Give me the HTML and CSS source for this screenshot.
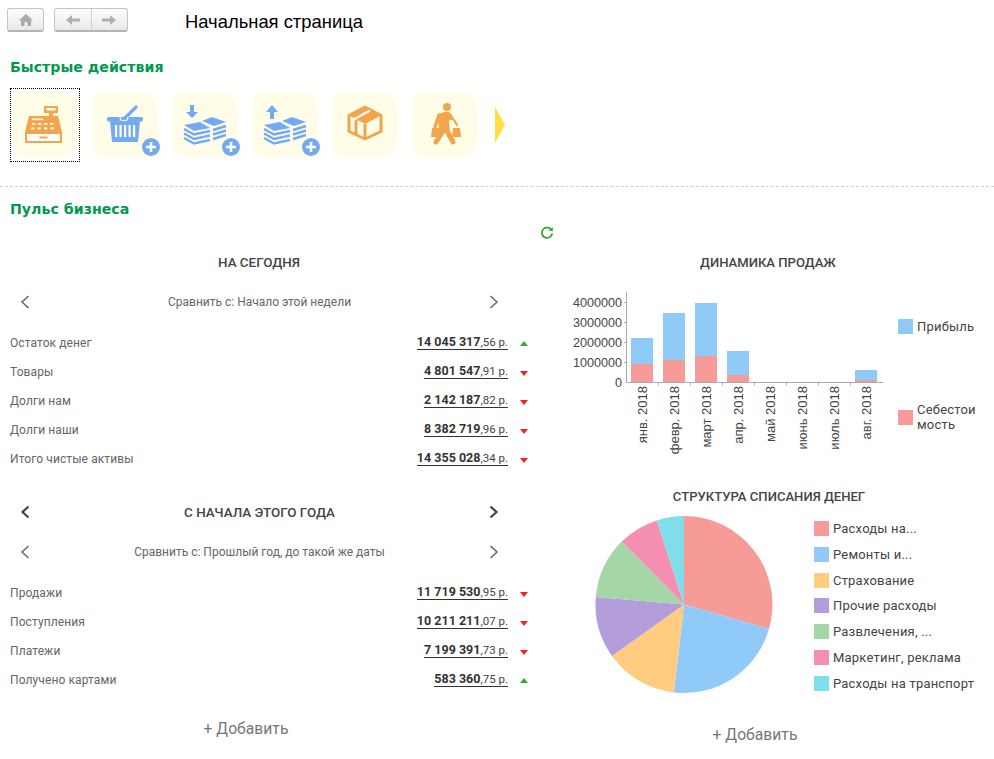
FILE: index.html
```html
<!DOCTYPE html>
<html lang="ru">
<head>
    <meta charset="UTF-8">
    <title>Начальная страница</title>
    <link rel="stylesheet" href="styles.css">
</head>
<body>
    <!-- Toolbar -->
    <div class="toolbar">
        <div class="tool-btn home-btn">
            <svg width="16" height="14" viewBox="0 0 16 14"><path d="M8 1 L15 7.5 H13 V13 H9.5 V9 H6.5 V13 H3 V7.5 H1 Z" fill="#aaa"/></svg>
        </div>
        <div class="tool-btn nav-btn">
            <span class="nav-part">
                <svg width="16" height="12" viewBox="0 0 16 12"><path d="M1 6 L7 1 V4.5 H15 V7.5 H7 V11 Z" fill="#b0b0b0"/></svg>
            </span>
            <span class="nav-part nav-part-right">
                <svg width="16" height="12" viewBox="0 0 16 12"><path d="M15 6 L9 1 V4.5 H1 V7.5 H9 V11 Z" fill="#b0b0b0"/></svg>
            </span>
        </div>
        <div class="page-title">Начальная страница</div>
    </div>

    <h2 class="section-title quick-title">Быстрые действия</h2>

    <!-- Shared pictures -->
    <svg class="defs" width="0" height="0">
        <symbol id="bills" viewBox="0 0 66 66">
            <polygon points="12,33 28,30 38,36 22,39" fill="#74aaf5"/>
            <polygon points="30,29 40,25 54,30 42,34" fill="#74aaf5"/>
            <g fill="none" stroke="#74aaf5" stroke-width="2.4">
                <polyline points="12,37 22,42.5 38,39"/>
                <polyline points="12,41.5 22,47 38,43.5"/>
                <polyline points="12,46 22,51.5 38,48"/>
                <polyline points="41,38 54,34"/>
                <polyline points="41,42.5 54,38.5"/>
                <polyline points="41,47 54,43"/>
            </g>
        </symbol>
        <symbol id="plus-badge" viewBox="0 0 66 66" overflow="visible">
            <circle cx="59" cy="55" r="9" fill="#74aaf5"/>
            <path d="M59 50 V60 M54 55 H64" stroke="#fff" stroke-width="2.6" fill="none"/>
        </symbol>
    </svg>

    <!-- Quick actions -->
    <div class="actions">
        <div class="tile tile-focus">
            <svg width="66" height="66" viewBox="0 0 66 66">
                <rect x="32" y="14" width="14" height="7" fill="#f2a64c"/>
                <rect x="34.5" y="16" width="9" height="2.5" fill="#fffce8"/>
                <rect x="37" y="21" width="4" height="4" fill="#f2a64c"/>
                <path d="M17 24 H46 L50 40 H13 Z" fill="#f2a64c"/>
                <rect x="20" y="26.5" width="11" height="1.6" fill="#fffce8"/>
                <g fill="#fffce8">
                    <rect x="20" y="31" width="3.4" height="1.8"/>
                    <rect x="26" y="31" width="3.4" height="1.8"/>
                    <rect x="32" y="31" width="3.4" height="1.8"/>
                    <rect x="38" y="31" width="3.4" height="1.8"/>
                    <rect x="19" y="35.5" width="3.4" height="1.8"/>
                    <rect x="25.5" y="35.5" width="3.4" height="1.8"/>
                    <rect x="32" y="35.5" width="3.4" height="1.8"/>
                    <rect x="38.5" y="35.5" width="3.4" height="1.8"/>
                </g>
                <rect x="14" y="41" width="35" height="9" fill="#fff" stroke="#f2a64c" stroke-width="2"/>
                <rect x="27.5" y="44.5" width="8" height="2" fill="#f2a64c"/>
            </svg>
        </div>
        <div class="tile">
            <svg width="66" height="66" viewBox="0 0 66 66">
                <path d="M32 27 L44 15" stroke="#74aaf5" stroke-width="3.2" stroke-linecap="round"/>
                <rect x="15" y="25" width="36" height="4.4" rx="1.5" fill="#74aaf5"/>
                <path d="M28 25 A4 4 0 0 0 36 25" fill="none" stroke="#fffce8" stroke-width="1.4"/>
                <path d="M18 29 H48 L46 50 H20 Z" fill="#74aaf5"/>
                <g fill="#fffce8">
                    <rect x="23" y="33" width="2.2" height="12"/>
                    <rect x="27.5" y="33" width="2.2" height="12"/>
                    <rect x="32" y="33" width="2.2" height="12"/>
                    <rect x="36.5" y="33" width="2.2" height="12"/>
                    <rect x="41" y="33" width="2.2" height="12"/>
                </g>
                <use href="#plus-badge" width="66" height="66"/>
            </svg>
        </div>
        <div class="tile">
            <svg width="66" height="66" viewBox="0 0 66 66">
                <path d="M18 13 H22 V20 H26 L20 26 L14 20 H18 Z" fill="#74aaf5"/>
                <use href="#bills" width="66" height="66"/>
                <use href="#plus-badge" width="66" height="66"/>
            </svg>
        </div>
        <div class="tile">
            <svg width="66" height="66" viewBox="0 0 66 66">
                <path d="M18 27 H22 V20 H26 L20 13 L14 20 H18 Z" fill="#74aaf5"/>
                <use href="#bills" width="66" height="66"/>
                <use href="#plus-badge" width="66" height="66"/>
            </svg>
        </div>
        <div class="tile">
            <svg width="66" height="66" viewBox="0 0 66 66">
                <polygon points="33,15 49,23.5 49,39.5 33,47 17,39.5 17,23.5" fill="none" stroke="#f2a64c" stroke-width="3" stroke-linejoin="round"/>
                <polygon points="33,14 50,23 33,32 16,23" fill="#f2a64c"/>
                <path d="M22.5 27 L38 18.5" stroke="#fffce8" stroke-width="2.4"/>
                <path d="M33 32 V47" stroke="#f2a64c" stroke-width="3"/>
                <path d="M24 28 V43" stroke="#f2a64c" stroke-width="3"/>
            </svg>
        </div>
        <div class="tile">
            <svg width="66" height="66" viewBox="0 0 66 66">
                <circle cx="35" cy="15" r="4" fill="#f2a64c"/>
                <path d="M26 23 Q31 19 37 20 L41 28 L37 28 L38 41 H27 Z" fill="#f2a64c"/>
                <g fill="none" stroke="#f2a64c" stroke-linecap="round">
                    <path d="M27 23 L23 35" stroke-width="3.5"/>
                    <path d="M38 22 L45 33" stroke-width="2.2"/>
                    <path d="M31 39 L24 50" stroke-width="5"/>
                    <path d="M35 39 L41 50" stroke-width="5"/>
                </g>
                <polygon points="20,36 28,36 28.5,45 19,45" fill="#f2a64c"/>
                <polygon points="41,36 48,36 49,45 40,45" fill="#f2a64c"/>
            </svg>
        </div>
        <div class="more-arrow"></div>
    </div>

    <hr class="divider">

    <h2 class="section-title pulse-title">Пульс бизнеса</h2>

    <div class="refresh-row">
        <svg width="14" height="14" viewBox="0 0 14 14">
            <path d="M11.5 4 A5.2 5.2 0 1 0 12.2 7.5" fill="none" stroke="#3aa535" stroke-width="1.8"/>
            <polygon points="8.5,4.6 12.8,5.2 12.8,1" fill="#3aa535"/>
        </svg>
    </div>

    <div class="pulse">
        <!-- Left column: numbers -->
        <div class="col-left">
            <div class="block-title left-title">НА СЕГОДНЯ</div>

            <div class="switcher compare-first">
                <svg class="chev" width="10" height="14" viewBox="0 0 10 14"><path d="M8.5 1 L2 7 L8.5 13" /></svg>
                <span>Сравнить с: Начало этой недели</span>
                <svg class="chev" width="10" height="14" viewBox="0 0 10 14"><path d="M1.5 1 L8 7 L1.5 13" /></svg>
            </div>

            <div class="stats">
                <div class="stat"><span class="stat-name">Остаток денег</span><span class="stat-value"><b>14 045 317</b>,56 р.</span><span class="arrow up"></span></div>
                <div class="stat"><span class="stat-name">Товары</span><span class="stat-value"><b>4 801 547</b>,91 р.</span><span class="arrow down"></span></div>
                <div class="stat"><span class="stat-name">Долги нам</span><span class="stat-value"><b>2 142 187</b>,82 р.</span><span class="arrow down"></span></div>
                <div class="stat"><span class="stat-name">Долги наши</span><span class="stat-value"><b>8 382 719</b>,96 р.</span><span class="arrow down"></span></div>
                <div class="stat"><span class="stat-name">Итого чистые активы</span><span class="stat-value"><b>14 355 028</b>,34 р.</span><span class="arrow down"></span></div>
            </div>

            <div class="switcher year-switcher">
                <svg class="chev chev-bold" width="10" height="14" viewBox="0 0 10 14"><path d="M8.5 1.5 L2.5 7 L8.5 12.5" /></svg>
                <span class="block-title">С НАЧАЛА ЭТОГО ГОДА</span>
                <svg class="chev chev-bold" width="10" height="14" viewBox="0 0 10 14"><path d="M1.5 1.5 L7.5 7 L1.5 12.5" /></svg>
            </div>

            <div class="switcher compare-second">
                <svg class="chev" width="10" height="14" viewBox="0 0 10 14"><path d="M8.5 1 L2 7 L8.5 13" /></svg>
                <span>Сравнить с: Прошлый год, до такой же даты</span>
                <svg class="chev" width="10" height="14" viewBox="0 0 10 14"><path d="M1.5 1 L8 7 L1.5 13" /></svg>
            </div>

            <div class="stats">
                <div class="stat"><span class="stat-name">Продажи</span><span class="stat-value"><b>11 719 530</b>,95 р.</span><span class="arrow down"></span></div>
                <div class="stat"><span class="stat-name">Поступления</span><span class="stat-value"><b>10 211 211</b>,07 р.</span><span class="arrow down"></span></div>
                <div class="stat"><span class="stat-name">Платежи</span><span class="stat-value"><b>7 199 391</b>,73 р.</span><span class="arrow down"></span></div>
                <div class="stat"><span class="stat-name">Получено картами</span><span class="stat-value"><b>583 360</b>,75 р.</span><span class="arrow up"></span></div>
            </div>

            <div class="add-link add-left">+ Добавить</div>
        </div>

        <!-- Right column: charts -->
        <div class="col-right">
            <div class="block-title chart-title">ДИНАМИКА ПРОДАЖ</div>

            <div class="bar-chart">
                <svg width="330" height="175" viewBox="0 0 330 175">
                    <g class="bars-profit">
                        <rect x="71" y="53" width="22" height="26"/>
                        <rect x="103" y="28" width="22" height="47"/>
                        <rect x="135" y="18" width="22" height="53"/>
                        <rect x="167" y="66" width="22" height="24"/>
                        <rect x="295" y="85" width="22" height="10"/>
                    </g>
                    <g class="bars-cost">
                        <rect x="71" y="79" width="22" height="18"/>
                        <rect x="103" y="75" width="22" height="22"/>
                        <rect x="135" y="71" width="22" height="26"/>
                        <rect x="167" y="90" width="22" height="7"/>
                        <rect x="295" y="95" width="22" height="2"/>
                    </g>
                    <path class="axis" d="M66.5 7 V97.5 H323 M64 17.5 H66 M64 37.5 H66 M64 57.5 H66 M64 77.5 H66 M98.5 98 V100 M130.5 98 V100 M162.5 98 V100 M194.5 98 V100 M226.5 98 V100 M258.5 98 V100 M290.5 98 V100"/>
                    <g class="y-labels">
                        <text x="62" y="22">4000000</text>
                        <text x="62" y="42">3000000</text>
                        <text x="62" y="62">2000000</text>
                        <text x="62" y="82">1000000</text>
                        <text x="62" y="102">0</text>
                    </g>
                    <g class="x-labels">
                        <text transform="translate(87 101) rotate(-90)">янв. 2018</text>
                        <text transform="translate(119 101) rotate(-90)">февр. 2018</text>
                        <text transform="translate(151 101) rotate(-90)">март 2018</text>
                        <text transform="translate(183 101) rotate(-90)">апр. 2018</text>
                        <text transform="translate(215 101) rotate(-90)">май 2018</text>
                        <text transform="translate(247 101) rotate(-90)">июнь 2018</text>
                        <text transform="translate(279 101) rotate(-90)">июль 2018</text>
                        <text transform="translate(311 101) rotate(-90)">авг. 2018</text>
                    </g>
                </svg>
                <div class="bar-legend">
                    <div class="legend-item"><span class="swatch c-blue"></span><span>Прибыль</span></div>
                    <div class="legend-item"><span class="swatch c-red"></span><span class="legend-wrap">Себестоимость</span></div>
                </div>
            </div>

            <div class="block-title chart-title pie-title">СТРУКТУРА СПИСАНИЯ ДЕНЕГ</div>

            <div class="pie-chart">
                <svg width="184" height="186" viewBox="0 0 184 186">
                    <path class="f-red" d="M92 92.5 L92 4 A88.5 88.5 0 0 1 177 117 Z"/>
                    <path class="f-blue" d="M92 92.5 L177 117 A88.5 88.5 0 0 1 81.9 180.5 Z"/>
                    <path class="f-orange" d="M92 92.5 L81.9 180.5 A88.5 88.5 0 0 1 20 144 Z"/>
                    <path class="f-purple" d="M92 92.5 L20 144 A88.5 88.5 0 0 1 3.8 85.1 Z"/>
                    <path class="f-green" d="M92 92.5 L3.8 85.1 A88.5 88.5 0 0 1 29.7 29.6 Z"/>
                    <path class="f-pink" d="M92 92.5 L29.7 29.6 A88.5 88.5 0 0 1 64.8 8.4 Z"/>
                    <path class="f-cyan" d="M92 92.5 L64.8 8.4 A88.5 88.5 0 0 1 92 4 Z"/>
                </svg>
                <ul class="pie-legend">
                    <li class="legend-item"><span class="swatch c-red"></span><span>Расходы на...</span></li>
                    <li class="legend-item"><span class="swatch c-blue"></span><span>Ремонты и...</span></li>
                    <li class="legend-item"><span class="swatch c-orange"></span><span>Страхование</span></li>
                    <li class="legend-item"><span class="swatch c-purple"></span><span>Прочие расходы</span></li>
                    <li class="legend-item"><span class="swatch c-green"></span><span>Развлечения, ...</span></li>
                    <li class="legend-item"><span class="swatch c-pink"></span><span>Маркетинг, реклама</span></li>
                    <li class="legend-item"><span class="swatch c-cyan"></span><span>Расходы на транспорт</span></li>
                </ul>
            </div>

            <div class="add-link add-right">+ Добавить</div>
        </div>
    </div>
</body>
</html>
```

FILE: styles.css
```css
body {
    margin: 0;
    padding: 0;
    background: white;
    font-family: Roboto, "Liberation Sans", Arial, sans-serif;
    font-size: 12px;
    color: #666;
    overflow: hidden;
}

.toolbar {
    display: flex;
    align-items: center;
    height: 24px;
    padding: 8px 0 0 7px;
}

.tool-btn {
    display: flex;
    align-items: center;
    justify-content: center;
    box-sizing: border-box;
    height: 24px;
    background: linear-gradient(#fdfdfd, #e9e9e9);
    border: 1px solid #c4c4c4;
    border-bottom: 2px solid #b4b4b4;
    border-radius: 3px;
}

.home-btn {
    width: 37px;
}

.nav-btn {
    width: 74px;
    margin-left: 10px;
}

.nav-part {
    flex: 1;
    display: flex;
    align-items: center;
    justify-content: center;
    height: 100%;
}

.nav-part-right {
    border-left: 1px solid #d0d0d0;
}

.page-title {
    margin-left: 57px;
    margin-top: 4px;
    font-family: "Liberation Sans", Arial, sans-serif;
    font-size: 18.4px;
    color: #000;
}

.section-title {
    margin: 0;
    padding-left: 10px;
    height: 20px;
    line-height: 20px;
    font-family: "DejaVu Sans", sans-serif;
    font-size: 14.2px;
    font-weight: bold;
    color: #00994d;
}

.quick-title {
    margin-top: 25px;
}

.defs {
    position: absolute;
}

.actions {
    display: flex;
    align-items: center;
    gap: 14px;
    margin-top: 15px;
    padding-left: 12px;
}

.tile {
    position: relative;
    width: 66px;
    height: 66px;
    background: #fffce8;
    border-radius: 18px;
}

.tile svg {
    display: block;
    overflow: visible;
}

.tile-focus::after {
    content: "";
    position: absolute;
    top: -4px;
    bottom: -4px;
    left: -2px;
    right: -2px;
    border: 1px dotted #000;
}

.more-arrow {
    width: 0;
    height: 0;
    margin-left: 3px;
    border-left: 10px solid #ffe040;
    border-top: 18px solid transparent;
    border-bottom: 18px solid transparent;
}

.divider {
    margin: 28px 0 0;
    border: none;
    border-top: 1px dashed #ccc;
}

.pulse-title {
    margin-top: 12px;
}

.refresh-row {
    display: flex;
    height: 14px;
    margin-top: 7px;
    padding-left: 540px;
}

.pulse {
    display: grid;
    grid-template-columns: 530px 464px;
    margin-top: 10px;
}

.block-title {
    height: 24px;
    line-height: 26px;
    font-weight: 500;
    font-size: 13.4px;
    color: #444;
    text-align: center;
}

.col-left {
    padding-left: 10px;
    padding-right: 2px;
    box-sizing: border-box;
}

.left-title {
    width: 498px;
}

.switcher {
    display: flex;
    align-items: center;
    justify-content: space-between;
    height: 24px;
    padding: 0 10px;
    width: 478px;
}

.chev {
    fill: none;
    stroke: #666;
    stroke-width: 1.5;
}

.chev:last-child {
    margin-right: -1px;
}

.chev-bold {
    stroke: #444;
    stroke-width: 2.2;
}

.compare-first {
    margin-top: 16px;
}

.year-switcher {
    margin-top: 27px;
}

.compare-second {
    margin-top: 16px;
}

.stats {
    margin-top: 14px;
}

.stat {
    display: grid;
    grid-template-columns: 1fr auto 20px;
    align-items: center;
    height: 29px;
}

.stat-name {
    letter-spacing: 0.1px;
}

.stat-value {
    display: inline-block;
    font-size: 11.5px;
    color: #444;
    border-bottom: 1px solid #333;
    line-height: 13px;
}

.stat-value b {
    font-size: 12.5px;
    color: #333;
}

.arrow {
    justify-self: end;
    width: 0;
    height: 0;
    border-left: 4.5px solid transparent;
    border-right: 4.5px solid transparent;
}

.arrow.up {
    margin-top: 2px;
    border-bottom: 5px solid #2fb02f;
}

.arrow.down {
    margin-top: 4px;
    border-top: 5px solid #f22222;
}

.add-link {
    height: 24px;
    line-height: 24px;
    font-size: 15.7px;
    color: #777;
    text-align: center;
}

.add-left {
    margin-top: 23px;
    padding-right: 46px;
}

.add-right {
    margin-top: 21px;
    padding-right: 14px;
}

.chart-title {
    padding-left: 12px;
    font-size: 13.1px;
}

.pie-title {
    margin-top: 24px;
    padding-left: 14px;
}

.bar-chart {
    display: flex;
    margin-top: 11px;
    padding-left: 30px;
}

.bar-chart svg {
    display: block;
    flex: none;
}

.bars-profit rect {
    fill: #90caf9;
}

.bars-cost rect {
    fill: #f69b98;
}

.axis {
    fill: none;
    stroke: #aaa;
    stroke-width: 1;
}

.y-labels text {
    font-family: "Liberation Sans", Arial, sans-serif;
    font-size: 12.6px;
    fill: #444;
    text-anchor: end;
}

.x-labels text {
    font-family: "Liberation Sans", Arial, sans-serif;
    font-size: 13px;
    fill: #444;
    text-anchor: end;
}

.bar-legend {
    display: flex;
    flex-direction: column;
    gap: 68px;
    margin-left: 8px;
    margin-top: 34px;
}

.legend-item {
    display: flex;
    align-items: center;
    gap: 4px;
    font-size: 13px;
    line-height: 15px;
    letter-spacing: 0.2px;
    color: #444;
}

.legend-wrap {
    width: 62px;
    overflow-wrap: anywhere;
}

.swatch {
    flex: none;
    width: 15px;
    height: 15px;
}

.c-red { background: #f69b98; }
.c-blue { background: #90caf9; }
.c-orange { background: #ffcc80; }
.c-purple { background: #b39ddb; }
.c-green { background: #a5d6a7; }
.c-pink { background: #f48fb1; }
.c-cyan { background: #80deea; }

.f-red { fill: #f69b98; }
.f-blue { fill: #90caf9; }
.f-orange { fill: #ffcc80; }
.f-purple { fill: #b39ddb; }
.f-green { fill: #a5d6a7; }
.f-pink { fill: #f48fb1; }
.f-cyan { fill: #80deea; }

.pie-chart {
    display: flex;
    margin-top: 4px;
    padding-left: 62px;
}

.pie-chart svg {
    display: block;
    flex: none;
}

.pie-legend {
    list-style: none;
    margin: 9px 0 0 38px;
    padding: 0;
}

.pie-legend li {
    height: 25.8px;
    align-items: flex-start;
}
```
